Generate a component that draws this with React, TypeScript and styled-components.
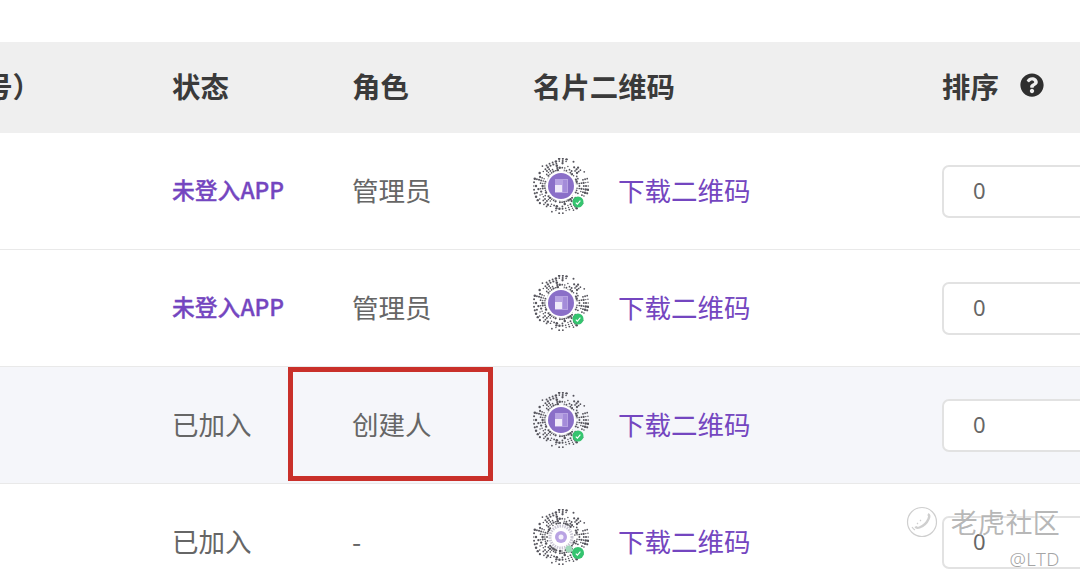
import React from "react";
import styled, { createGlobalStyle } from "styled-components";
import { FaQuestionCircle } from "react-icons/fa";

const cjk = `"Noto Sans CJK SC", "Noto Sans", sans-serif`;

interface I_Member {
  status: string;
  invited: boolean;
  role: string;
  active?: boolean;
  marked?: boolean;
  plainCode?: boolean;
}

const members: I_Member[] = [
  { status: "未登入APP", invited: true, role: "管理员" },
  { status: "未登入APP", invited: true, role: "管理员" },
  { status: "已加入", invited: false, role: "创建人", active: true, marked: true },
  { status: "已加入", invited: false, role: "-", plainCode: true },
];

// fake the mini program code: rays of dots around a centre disc
const codeDots = (() => {
  const dots: { x: number; y: number; r: number }[] = [];
  let seed = 17;
  const next = () => {
    seed = (seed * 9301 + 49297) % 233280;
    return seed / 233280;
  };
  for (let i = 0; i < 46; i++) {
    const angle = (i / 46) * Math.PI * 2;
    for (let d = 14; d < 28; d += 2.2) {
      if (next() < 0.62) {
        dots.push({
          x: 28 + Math.cos(angle) * d,
          y: 28 + Math.sin(angle) * d,
          r: 0.7 + next() * 0.6,
        });
      }
    }
  }
  return dots;
})();

const MiniCode: React.FC<{ plain?: boolean }> = ({ plain }) => (
  <CodeSvg viewBox="0 0 56 56">
    {codeDots.map((dot, i) => (
      <circle key={i} cx={dot.x} cy={dot.y} r={dot.r} fill="#55545c" />
    ))}
    {plain ? (
      <>
        <circle cx="28" cy="28" r="12" fill="#ffffff" />
        <circle cx="28" cy="28" r="11" fill="none" stroke="#c9c6d4" strokeWidth="3" strokeDasharray="1.5 1" />
        <circle cx="28" cy="28" r="6" fill="#b9a3e3" />
        <circle cx="28" cy="28" r="2.5" fill="#f4f0fb" />
        <circle cx="36" cy="40" r="3.5" fill="#9fd8b8" />
      </>
    ) : (
      <>
        <circle cx="28" cy="28" r="15" fill="#ffffff" />
        <circle cx="28" cy="28" r="13" fill="#8a6fc8" />
        <rect x="22" y="21" width="13" height="14" fill="#b7a3e2" />
        <rect x="22" y="27" width="7" height="7" fill="#efeaf9" />
        <rect x="30" y="22" width="4" height="12" fill="#a48cd9" />
      </>
    )}
    <circle cx="45" cy="44" r={plain ? 6 : 5.5} fill="#35c46f" />
    <path d="M42.8 44.6l1.600 1.500 3-3.400" fill="none" stroke="#ffffff" strokeWidth="1.100" />
  </CodeSvg>
);

const App: React.FC = () => {
  return (
    <Page>
      <GlobalStyle />
      <HeadRow>
        <PhoneHead>（手机号）</PhoneHead>
        <HeadCell>状态</HeadCell>
        <HeadCell>角色</HeadCell>
        <HeadCell>名片二维码</HeadCell>
        <SortHead>
          排序
          <FaQuestionCircle size={24} color="#2f2f2f" />
        </SortHead>
      </HeadRow>

      {members.map((member, index) => (
        <Row key={index} $active={member.active}>
          <span />
          <Status $invited={member.invited}>{member.status}</Status>
          <RoleCell>
            {member.role}
            {member.marked && <RedFrame />}
          </RoleCell>
          <CodeCell>
            <MiniCode plain={member.plainCode} />
            <DownloadLink>下载二维码</DownloadLink>
          </CodeCell>
          <SortCell>
            <SortInput>0</SortInput>
          </SortCell>
        </Row>
      ))}

      <Watermark>
        <WatermarkTop>
          <svg width="32" height="32" viewBox="0 0 32 32" fill="none" stroke="#cfcfcf" strokeWidth="1.200">
            <circle cx="16" cy="16" r="14.500" />
            <path d="M22 8c1.500 1 1.500 3 .5 5-1.500 3.500-5 7-9 8.500-2 .7-3.500.2-4-1" strokeWidth="2.400" />
            <path d="M6 21c1 1.500 2 2.500 3 3M11 17l1 1M14 14l1 1" />
          </svg>
          <WatermarkName>老虎社区</WatermarkName>
        </WatermarkTop>
        <WatermarkUser>@LTD</WatermarkUser>
      </Watermark>
    </Page>
  );
};

export default App;

const GlobalStyle = createGlobalStyle`
  html, body {
    margin: 0;
    background: #fff;
    overflow: hidden;
  }
`;

const Page = styled.div`
  position: relative;
  width: 1080px;
  height: 585px;
  padding-top: 42px;
  box-sizing: border-box;
  overflow: hidden;
  font-family: ${cjk};
`;

const HeadRow = styled.div`
  display: grid;
  grid-template-columns: 172px 180px 181px 409px 138px;
  align-items: center;
  height: 91px;
  background: #efefef;
`;

const HeadCell = styled.div`
  padding-bottom: 5px;
  font-size: 28.400px;
  font-weight: 700;
  color: #3a3a3a;
  white-space: nowrap;
`;

const PhoneHead = styled(HeadCell)`
  display: flex;
  justify-content: flex-end;
  padding-right: 131px;
  overflow: hidden;
`;

const SortHead = styled(HeadCell)`
  display: flex;
  align-items: center;
  gap: 21px;
`;

const Row = styled.div<{ $active?: boolean }>`
  display: grid;
  grid-template-columns: 172px 180px 181px 409px 138px;
  align-items: center;
  height: 116px;
  border-bottom: 1px solid #e9e9e9;
  background: ${({ $active }) => ($active ? "#f5f6fa" : "#fff")};
`;

const Status = styled.div<{ $invited: boolean }>`
  padding-bottom: 4px;
  font-size: ${({ $invited }) => ($invited ? "22.800px" : "26.500px")};
  font-weight: ${({ $invited }) => ($invited ? 500 : 400)};
  -webkit-text-stroke: ${({ $invited }) => ($invited ? "0.300px" : "0")};
  color: ${({ $invited }) => ($invited ? "#7446c0" : "#666")};
  white-space: nowrap;
`;

const RoleCell = styled.div`
  position: relative;
  align-self: stretch;
  display: flex;
  align-items: center;
  padding-bottom: 4px;
  font-size: 26.500px;
  color: #666;
  white-space: nowrap;
`;

const RedFrame = styled.div`
  position: absolute;
  left: -64px;
  top: 0;
  width: 205px;
  height: 114px;
  box-sizing: border-box;
  border: 5px solid #c9302a;
`;

const CodeCell = styled.div`
  display: flex;
  align-items: center;
  gap: 29px;
`;

const CodeSvg = styled.svg`
  width: 56px;
  height: 56px;
  flex: none;
  margin-top: -11px;
  filter: blur(0.6px);
`;

const DownloadLink = styled.a`
  padding-bottom: 4px;
  font-size: 26.500px;
  color: #7446c0;
  white-space: nowrap;
`;

const SortCell = styled.div`
  display: flex;
  align-items: center;
`;

const SortInput = styled.div`
  display: flex;
  align-items: center;
  flex: none;
  width: 200px;
  height: 53px;
  padding: 0 0 2px 29px;
  box-sizing: border-box;
  border: 2px solid #e2e2e2;
  border-radius: 7px;
  background: #fff;
  font-family: "Noto Sans", sans-serif;
  font-size: 22px;
  color: #666;
`;

const Watermark = styled.div`
  position: absolute;
  left: 907px;
  top: 503px;
  display: flex;
  flex-direction: column;
  align-items: flex-end;
  width: 153px;
`;

const WatermarkTop = styled.div`
  display: flex;
  align-items: center;
  gap: 13px;
`;

const WatermarkName = styled.div`
  font-size: 27px;
  line-height: 38px;
  letter-spacing: 0.300px;
  color: rgba(160, 160, 160, 0.75);
  text-shadow: 0 0 2px #fff;
  white-space: nowrap;
`;

const WatermarkUser = styled.div`
  margin-top: 6px;
  font-family: "Noto Sans", sans-serif;
  font-size: 18.500px;
  font-weight: 300;
  line-height: 24px;
  letter-spacing: 0.500px;
  color: rgba(140, 140, 140, 0.8);
  text-shadow: 0 0 2px #fff;
`;
